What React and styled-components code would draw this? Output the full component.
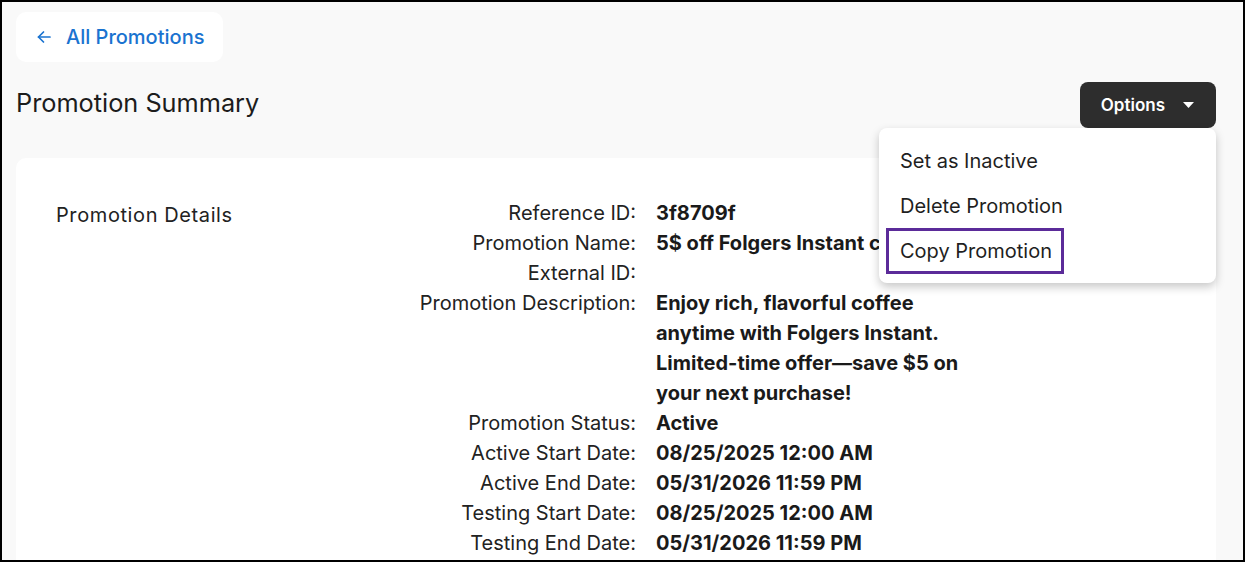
import React from "react";
import styled, { createGlobalStyle } from "styled-components";

const Global = createGlobalStyle`
  html, body { margin: 0; padding: 0; }
  body { font-family: Inter, "Noto Sans", "Liberation Sans", sans-serif; background: #000; }
  * { box-sizing: border-box; }
`;

const Frame = styled.div`
  width: 1245px;
  height: 562px;
  border: 2px solid #000;
  background: #f9f9f9;
  overflow: hidden;
  padding: 10px 0 0 14px;
`;

const Content = styled.div`
  width: 1200px;
  display: flex;
  flex-direction: column;
`;

const BackButton = styled.a`
  display: inline-flex;
  align-items: center;
  align-self: flex-start;
  gap: 14px;
  height: 50px;
  padding: 0 19px 0 20px;
  background: #fff;
  border-radius: 10px;
  color: #1a73d0;
  font-size: 20px;
  font-weight: 500;
  text-decoration: none;
  cursor: pointer;
`;

const TitleRow = styled.div`
  position: relative;
  display: flex;
  align-items: center;
  justify-content: space-between;
  margin-top: 20px;
  height: 46px;
`;

const Title = styled.h1`
  margin: 0;
  font-size: 25.3px;
  font-weight: 400;
  color: #1c1c1c;
  position: relative;
  top: -3px;
`;

const OptionsButton = styled.button`
  display: inline-flex;
  align-items: center;
  gap: 18px;
  height: 46px;
  padding: 0 22px 0 21px;
  background: #2d2d2d;
  color: #fff;
  border: none;
  border-radius: 8px;
  font-family: inherit;
  font-size: 17px;
  font-weight: 600;
  cursor: pointer;
`;

const Menu = styled.div`
  position: absolute;
  top: 46px;
  right: 0;
  width: 337px;
  height: 155px;
  background: #fff;
  border-radius: 8px;
  box-shadow: 0 4px 10px rgba(0, 0, 0, 0.22);
  padding: 10px 0 0 7px;
  z-index: 5;
`;

const MenuItem = styled.div`
  width: fit-content;
  height: ${(p) => (p.$focused ? "46px" : "45px")};
  display: flex;
  align-items: center;
  padding: 0 9px 0 11px;
  border: 3px solid ${(p) => (p.$focused ? "#5b2b99" : "transparent")};
  font-size: 20px;
  color: #1f1f1f;
  cursor: pointer;
  position: relative;
  top: ${(p) => (p.$focused ? "-0.5px" : "0")};
`;

const Card = styled.div`
  margin-top: 30px;
  background: #fff;
  border-radius: 10px;
  padding: 40px;
  display: flex;
  min-height: 420px;
`;

const SectionTitle = styled.div`
  width: 300px;
  font-size: 20px;
  line-height: 30px;
  letter-spacing: 0.6px;
  color: #222;
  position: relative;
  top: 2px;
`;

const Details = styled.div`
  display: grid;
  grid-template-columns: 280px 320px;
  column-gap: 20px;
  font-size: 20px;
  line-height: 30px;
`;

const Label = styled.div`
  text-align: right;
  color: #222;
  white-space: nowrap;
`;

const Value = styled.div`
  font-weight: 700;
  color: #1a1a1a;
`;

const ArrowLeft = () => (
  <svg width="16" height="16" viewBox="0 0 16 16" fill="none" stroke="currentColor" strokeWidth="1.7" strokeLinecap="round" strokeLinejoin="round">
    <path d="M14 8H2.5" />
    <path d="M7.5 3L2.5 8l5 5" />
  </svg>
);

const Caret = () => (
  <svg width="11" height="6" viewBox="0 0 11 6">
    <path d="M0 0h11L5.5 6z" fill="#fff" />
  </svg>
);

const rows = [
  ["Reference ID:", "3f8709f"],
  ["Promotion Name:", "5$ off Folgers Instant coffee"],
  ["External ID:", ""],
  ["Promotion Description:", "Enjoy rich, flavorful coffee anytime with Folgers Instant. Limited-time offer\u2014save $5 on your next purchase!"],
  ["Promotion Status:", "Active"],
  ["Active Start Date:", "08/25/2025 12:00 AM"],
  ["Active End Date:", "05/31/2026 11:59 PM"],
  ["Testing Start Date:", "08/25/2025 12:00 AM"],
  ["Testing End Date:", "05/31/2026 11:59 PM"],
];

export default function App() {
  return (
    <>
      <Global />
      <Frame>
        <Content>
          <BackButton>
            <ArrowLeft />
            All Promotions
          </BackButton>
          <TitleRow>
            <Title>Promotion Summary</Title>
            <OptionsButton>
              Options
              <Caret />
            </OptionsButton>
            <Menu>
              <MenuItem>Set as Inactive</MenuItem>
              <MenuItem>Delete Promotion</MenuItem>
              <MenuItem $focused>Copy Promotion</MenuItem>
            </Menu>
          </TitleRow>
          <Card>
            <SectionTitle>Promotion Details</SectionTitle>
            <Details>
              {rows.map(([l, v]) => (
                <React.Fragment key={l}>
                  <Label>{l}</Label>
                  <Value>{v}</Value>
                </React.Fragment>
              ))}
            </Details>
          </Card>
        </Content>
      </Frame>
    </>
  );
}
